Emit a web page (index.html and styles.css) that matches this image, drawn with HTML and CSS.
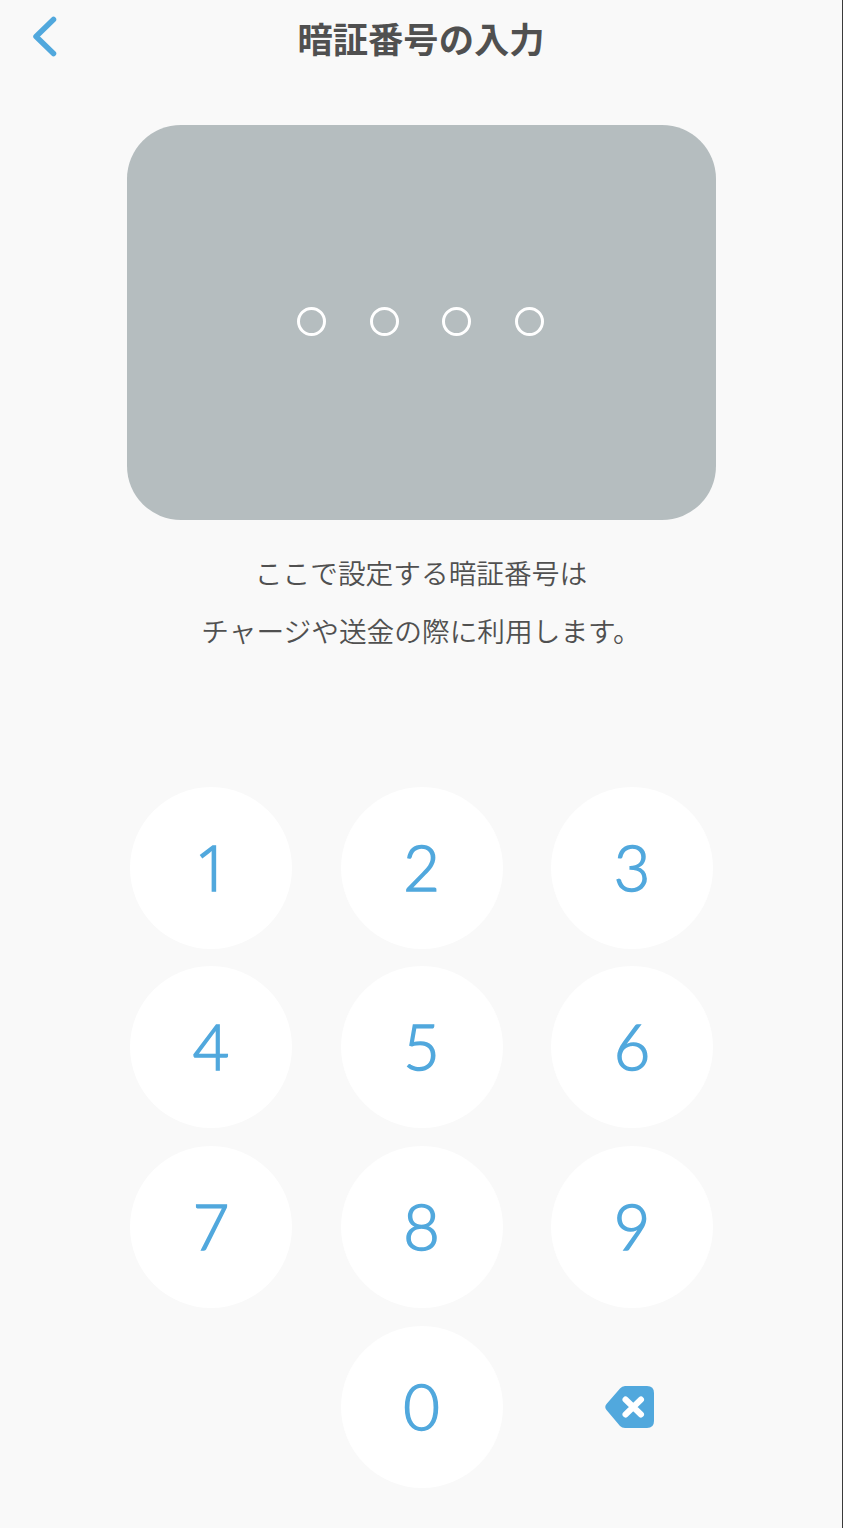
FILE: index.html
```
<!DOCTYPE html>
<html lang="ja">
<head>
    <meta charset="UTF-8">
    <title>暗証番号の入力</title>
    <link rel="stylesheet" href="styles.css">
</head>
<body>
    <header class="header">
        <button class="back" aria-label="戻る">
            <svg width="26" height="42" viewBox="0 0 26 42">
                <path d="M22.500 3.500L5 20.500L22.500 37.500" />
            </svg>
        </button>
        <h1>暗証番号の入力</h1>
    </header>

    <div class="card">
        <span class="dot"></span>
        <span class="dot"></span>
        <span class="dot"></span>
        <span class="dot"></span>
    </div>

    <p class="message">ここで設定する暗証番号は<br>チャージや送金の際に利用します。</p>

    <!-- Number pad -->
    <div class="keypad">
        <button class="key key-one">1</button>
        <button class="key">2</button>
        <button class="key">3</button>
        <button class="key">4</button>
        <button class="key">5</button>
        <button class="key">6</button>
        <button class="key">7</button>
        <button class="key">8</button>
        <button class="key">9</button>
        <button class="key key-zero">0</button>
        <button class="key key-delete" aria-label="削除">
            <svg width="50" height="44" viewBox="0 0 50 44">
                <path class="shape" d="M20 1H42Q49 1 49 8V36Q49 43 42 43H20Q17 43 15 41L1.500 25Q-1 22 1.500 19L15 3.500Q17 1 20 1Z" />
                <path class="cross" d="M20.500 14.500L36 29.500M36 14.500L20.500 29.500" />
            </svg>
        </button>
    </div>
</body>
</html>
```

FILE: styles.css
```
* {
    box-sizing: border-box;
}
body {
    font-family: "Noto Sans CJK JP", sans-serif;
    background-color: #f9f9f9;
    color: #505050;
    margin: 0;
    height: 1528px;
    border-right: 1px solid #3a3a3a;
    overflow: hidden;
}
button {
    border: none;
    background: none;
    padding: 0;
}
.header {
    display: grid;
    grid-template-columns: 80px 1fr 80px;
    align-items: center;
    height: 76px;
}
.header h1 {
    margin: 0;
    font-size: 35.3px;
    font-weight: 700;
    line-height: 50px;
    text-align: center;
}
.back {
    width: 26px;
    height: 42px;
    margin: -2px 0 0 31px;
}
.back svg {
    display: block;
    fill: none;
    stroke: #51a8dd;
    stroke-width: 5.5;
    stroke-linecap: round;
    stroke-linejoin: round;
}
.card {
    display: flex;
    justify-content: center;
    align-items: center;
    gap: 43.8px;
    width: 589px;
    height: 395px;
    margin: 48.5px auto 0;
    padding: 0 1px 1px 0;
    border-radius: 54px;
    background-color: #b5bdbf;
}
.dot {
    width: 29px;
    height: 29px;
    border: 3px solid #fff;
    border-radius: 50%;
}
.message {
    margin: 23.5px 0 0;
    font-size: 27.7px;
    font-weight: 350;
    line-height: 58px;
    text-align: center;
}
.keypad {
    display: grid;
    grid-template-columns: repeat(3, 162px);
    gap: 17.7px 48.5px;
    justify-content: center;
    margin-top: 127.5px;
    padding-left: 1px;
}
.key {
    height: 162px;
    padding-bottom: 2px;
    border-radius: 50%;
    background-color: #fff;
    color: #51a8dd;
    font-family: Lato, sans-serif;
    font-size: 63px;
    font-weight: 300;
    line-height: 160px;
    -webkit-text-stroke: 1.5px #51a8dd;
}
.key-one {
    font-family: "Open Sans", sans-serif;
    font-size: 62px;
    padding-left: 3px;
}
.key-zero {
    grid-column: 2;
}
.key-delete {
    display: flex;
    justify-content: center;
    align-items: center;
    padding: 0 4px 0 0;
    background: none;
}
.shape {
    fill: #51a8dd;
}
.cross {
    stroke: #fff;
    stroke-width: 6;
    stroke-linecap: round;
}
```
